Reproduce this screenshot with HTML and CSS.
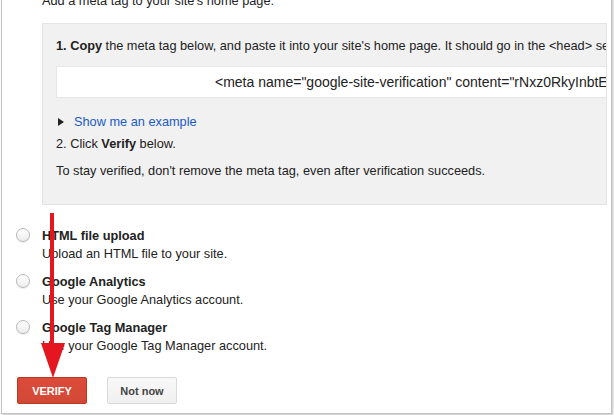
FILE: index.html
```html
<!DOCTYPE html>
<html>
<head>
<meta charset="utf-8">
<link rel="stylesheet" href="styles.css">
</head>
<body>
<div class="frame">
  <p class="intro">Add a meta tag to your site's home page.</p>
  <div class="panel">
    <p class="line"><b>1. Copy</b> the meta tag below, and paste it into your site's home page. It should go in the &lt;head&gt; section, before the first &lt;body&gt; section.</p>
    <div class="code">&lt;meta name="google-site-verification" content="rNxz0RkyInbtE2hYwJk4pQ8sLmV" /&gt;</div>
    <div class="example"><span class="tri"></span><a class="link">Show me an example</a></div>
    <p class="step2">2. Click <b>Verify</b> below.</p>
    <p class="note">To stay verified, don't remove the meta tag, even after verification succeeds.</p>
  </div>
  <div class="options">
    <div class="opt">
      <span class="radio"></span>
      <div class="opt-text">
        <div class="opt-title">HTML file upload</div>
        <div class="opt-sub">Upload an HTML file to your site.</div>
      </div>
    </div>
    <div class="opt">
      <span class="radio"></span>
      <div class="opt-text">
        <div class="opt-title">Google Analytics</div>
        <div class="opt-sub">Use your Google Analytics account.</div>
      </div>
    </div>
    <div class="opt">
      <span class="radio"></span>
      <div class="opt-text">
        <div class="opt-title">Google Tag Manager</div>
        <div class="opt-sub">Use your Google Tag Manager account.</div>
      </div>
    </div>
  </div>
  <div class="buttons">
    <button class="btn btn-red">VERIFY</button>
    <button class="btn btn-grey">Not now</button>
  </div>
</div>
<svg class="arrow" width="30" height="170" viewBox="0 0 30 170">
  <rect x="9" y="0" width="4" height="135" fill="#e4161f"/>
  <polygon points="0,130 24,130 12,165" fill="#e4161f"/>
</svg>
</body>
</html>
```
FILE: styles.css
```css
html, body {
  margin: 0;
  padding: 0;
  background: #fff;
}
body {
  font-family: "Liberation Sans", Arial, sans-serif;
  font-size: 12.75px;
  color: #222;
  position: relative;
  height: 415px;
  overflow: hidden;
}
p { margin: 0; }
.frame {
  box-sizing: border-box;
  width: 611px;
  margin: 0 0 0 1px;
  border: 1px solid #c4c4c4;
  border-top: none;
  box-shadow: 1px 1px 2px rgba(0,0,0,0.25);
  padding: 0 4px 9px 14px;
  background: #fff;
}
.intro {
  line-height: 16px;
  margin-top: -7px;
  margin-left: 26px;
}
.panel {
  margin: 14px 0 0 26px;
  background: #f1f1f1;
  border: 1px solid #e4e4e4;
  padding: 14px 0 25px 13px;
  overflow: hidden;
  white-space: nowrap;
  line-height: 16px;
}
.code {
  margin: 12px -40px 0 0;
  background: #fff;
  border: 1px solid #e6e6e6;
  height: 30px;
  line-height: 30px;
  padding-left: 158px;
  font-size: 14px;
}
.example {
  margin-top: 16px;
  display: flex;
  align-items: center;
}
.tri {
  width: 0;
  height: 0;
  border-left: 6px solid #222;
  border-top: 4px solid transparent;
  border-bottom: 4px solid transparent;
  margin: 0 10px 0 2px;
}
.link { color: #1a5bc8; }
.step2 { margin-top: 6px; }
.note { margin-top: 11px; }
.options {
  margin-top: 22px;
  display: flex;
  flex-direction: column;
  gap: 10px;
}
.opt {
  display: flex;
  align-items: flex-start;
  gap: 12px;
  line-height: 18px;
}
.radio {
  box-sizing: border-box;
  width: 14px;
  height: 14px;
  border-radius: 50%;
  border: 1px solid #b8b8b8;
  background: linear-gradient(#fff, #ececec);
  box-shadow: 0 1px 1px rgba(0,0,0,0.08);
  margin-top: 1px;
  flex: none;
}
.opt-title { font-weight: bold; color: #222; }
.opt-sub { color: #222; }
.buttons {
  margin-top: 22px;
  display: flex;
  gap: 20px;
  padding-left: 1px;
}
.btn {
  box-sizing: border-box;
  height: 27px;
  width: 70px;
  border-radius: 2px;
  font-family: "Liberation Sans", Arial, sans-serif;
  font-size: 11px;
  font-weight: bold;
  padding: 0;
}
.btn-red {
  background: linear-gradient(#dd4b39, #d14836);
  border: 1px solid #b8351f;
  color: #fff;
}
.btn-grey {
  background: linear-gradient(#f8f8f8, #f0f0f0);
  border: 1px solid #d9d9d9;
  color: #444;
}
.arrow {
  position: absolute;
  left: 41px;
  top: 213px;
}
```
